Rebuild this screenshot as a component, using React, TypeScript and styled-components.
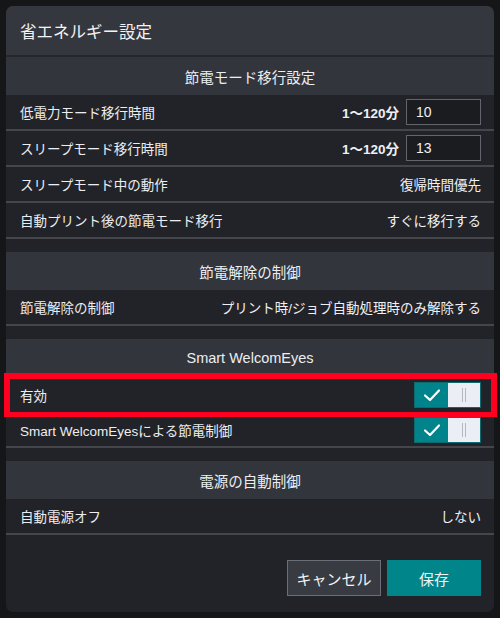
import React from "react";
import styled, { createGlobalStyle } from "styled-components";

const Global = createGlobalStyle`
  html, body { margin: 0; padding: 0; background: #151618; }
  body { font-family: "Liberation Sans", "Noto Sans CJK JP", "Noto Sans", sans-serif; color: #ecedf0; }
  * { box-sizing: border-box; }
`;

const Page = styled.div`
  width: 500px;
  height: 618px;
  padding: 6px;
  background: #151618;
`;

const Dialog = styled.div`
  width: 488px;
  height: 606px;
  background: #222328;
  border-radius: 7px;
  display: flex;
  flex-direction: column;
  position: relative;
`;

const TitleBar = styled.div`
  height: 51px;
  background: #35373f;
  border-radius: 7px 7px 0 0;
  border-bottom: 2px solid #26272c;
  display: flex;
  align-items: center;
  padding-left: 14px;
  font-size: 16.5px;
  color: #f2f3f5;
`;

const SectionHeader = styled.div`
  height: 38px;
  background: #32353c;
  display: flex;
  align-items: center;
  justify-content: center;
  font-size: 14.5px;
  color: #eceef1;
`;

const Row = styled.div<{ $sep?: boolean; $h?: number }>`
  height: ${(p) => p.$h ?? 36}px;
  display: flex;
  align-items: center;
  justify-content: space-between;
  padding: 0 13px 0 14px;
  font-size: 13.5px;
  border-bottom: ${(p) => (p.$sep === false ? "none" : "2px solid #44464c")};
`;

const Label = styled.span`
  color: #eceef1;
`;

const Value = styled.span<{ $bold?: boolean }>`
  color: #eff0f2;
  font-weight: ${(p) => (p.$bold ? 700 : 400)};
`;

const RangeGroup = styled.div`
  display: flex;
  align-items: center;
  gap: 7px;
`;

const NumInput = styled.div`
  width: 75px;
  height: 26px;
  background: #1b1c20;
  border: 1px solid #62656c;
  display: flex;
  align-items: center;
  padding-left: 9px;
  font-size: 14px;
  color: #f1f2f4;
`;

const Gap = styled.div`
  height: 13px;
`;

const Highlight = styled.div`
  position: absolute;
  left: -2px;
  right: -3px;
  top: 367px;
  height: 44px;
  border: 6px solid #ff0020;
  border-bottom-width: 5px;
  pointer-events: none;
`;

const ToggleBox = styled.div`
  width: 67px;
  height: 26px;
  display: flex;
  border: 1px solid #0b6b70;
`;

const ToggleOn = styled.div`
  width: 33px;
  background: #00838a;
  display: flex;
  align-items: center;
  justify-content: center;
`;

const ToggleKnob = styled.div`
  flex: 1;
  background: #eceef5;
  display: flex;
  align-items: center;
  justify-content: center;
  gap: 2px;
`;

const Grip = styled.span`
  width: 1px;
  height: 14px;
  background: #b5b8c3;
`;

const Footer = styled.div`
  flex: 1;
  display: flex;
  justify-content: flex-end;
  align-items: flex-start;
  padding: 25px 13px 0 0;
  gap: 6px;
`;

const Button = styled.button<{ $primary?: boolean }>`
  width: 94px;
  height: 36px;
  font-family: "Noto Sans CJK JP", sans-serif;
  font-size: 15px;
  color: #f2f3f5;
  background: ${(p) => (p.$primary ? "#00858b" : "#393b43")};
  border: 1px solid ${(p) => (p.$primary ? "#00858b" : "#6b6e76")};
  cursor: pointer;
`;

const Toggle = () => (
  <ToggleBox>
    <ToggleOn>
      <svg width="18" height="14" viewBox="0 0 18 14">
        <path d="M2 7.5 L7 12 L16 2.5" fill="none" stroke="#ffffff" strokeWidth="2.2" strokeLinecap="round" strokeLinejoin="round" />
      </svg>
    </ToggleOn>
    <ToggleKnob>
      <Grip />
      <Grip />
    </ToggleKnob>
  </ToggleBox>
);

export default function App() {
  return (
    <>
      <Global />
      <Page>
        <Dialog>
          <TitleBar>省エネルギー設定</TitleBar>
          <SectionHeader>節電モード移行設定</SectionHeader>
          <Row>
            <Label>低電力モード移行時間</Label>
            <RangeGroup>
              <Value $bold>1〜120分</Value>
              <NumInput>10</NumInput>
            </RangeGroup>
          </Row>
          <Row>
            <Label>スリープモード移行時間</Label>
            <RangeGroup>
              <Value $bold>1〜120分</Value>
              <NumInput>13</NumInput>
            </RangeGroup>
          </Row>
          <Row>
            <Label>スリープモード中の動作</Label>
            <Value>復帰時間優先</Value>
          </Row>
          <Row>
            <Label>自動プリント後の節電モード移行</Label>
            <Value>すぐに移行する</Value>
          </Row>
          <Gap />
          <SectionHeader>節電解除の制御</SectionHeader>
          <Row>
            <Label>節電解除の制御</Label>
            <Value>プリント時/ジョブ自動処理時のみ解除する</Value>
          </Row>
          <Gap />
          <SectionHeader>Smart WelcomEyes</SectionHeader>
          <Row $sep={false} $h={36}>
            <Label>有効</Label>
            <Toggle />
          </Row>
          <Row $h={35}>
            <Label>Smart WelcomEyesによる節電制御</Label>
            <Toggle />
          </Row>
          <Gap />
          <SectionHeader>電源の自動制御</SectionHeader>
          <Row>
            <Label>自動電源オフ</Label>
            <Value>しない</Value>
          </Row>
          <Footer>
            <Button>キャンセル</Button>
            <Button $primary>保存</Button>
          </Footer>
          <Highlight />
        </Dialog>
      </Page>
    </>
  );
}
